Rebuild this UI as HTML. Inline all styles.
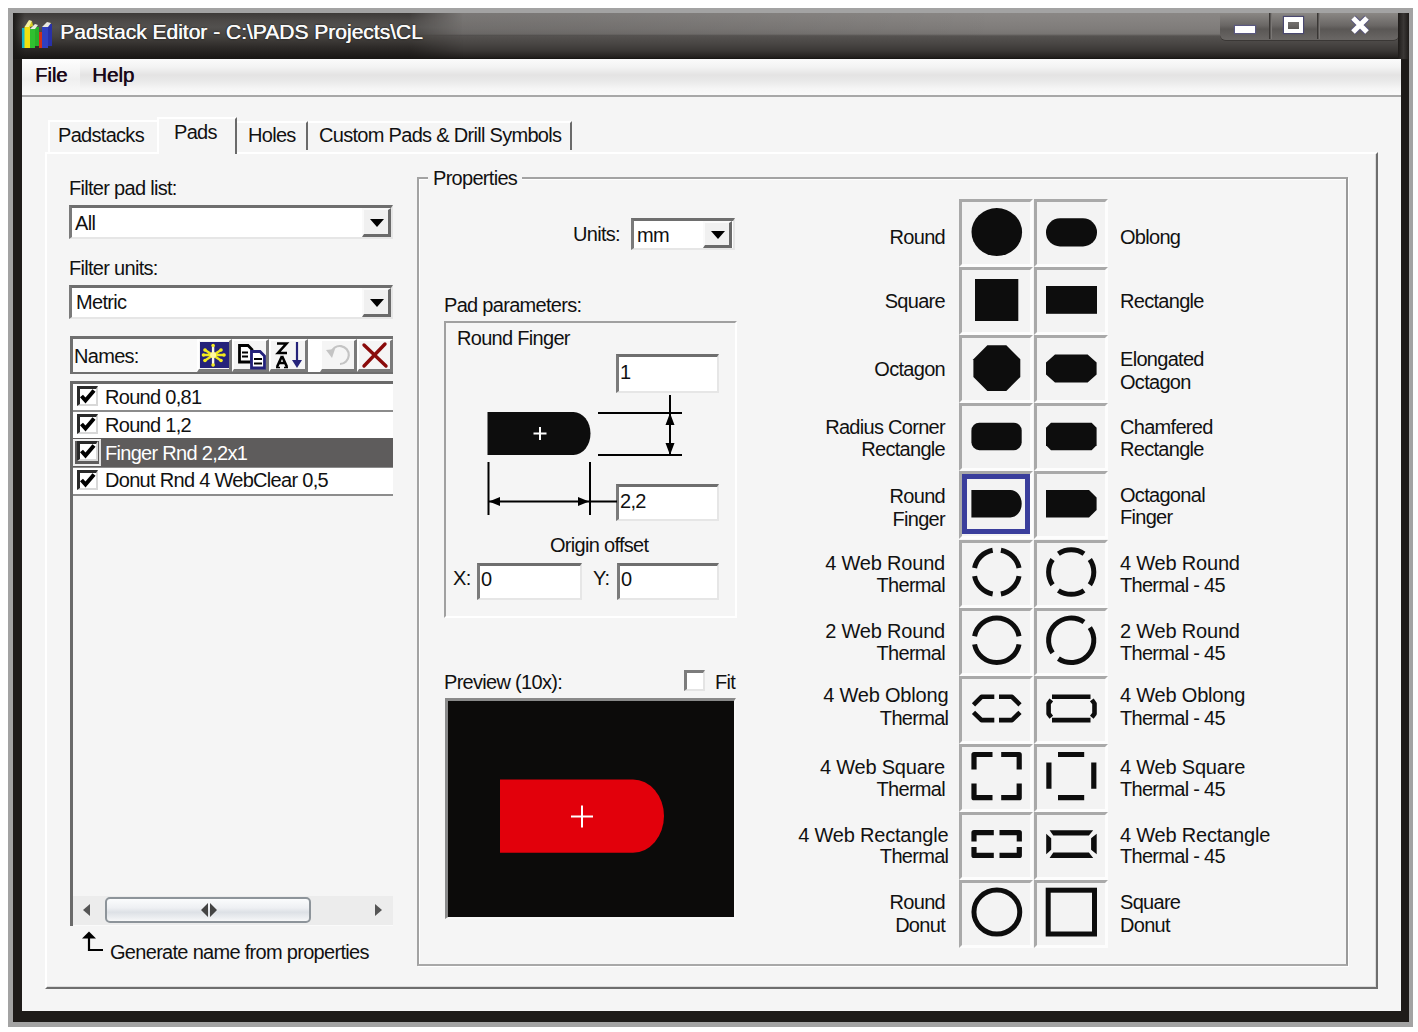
<!DOCTYPE html>
<html><head><meta charset="utf-8">
<style>
*{box-sizing:border-box;margin:0;padding:0}
html,body{width:1418px;height:1032px;overflow:hidden;background:#fff;font-family:"Liberation Sans",sans-serif;}
.a{position:absolute}
.t{position:absolute;font-size:20px;letter-spacing:-0.7px;color:#111;white-space:pre;line-height:23px}
.r{text-align:right}
.t:not(.r){margin-left:-1px}
.sunk{position:absolute;background:#fff;border-top:3px solid #6e6e6e;border-left:3px solid #7a7a7a;border-bottom:2px solid #e6e6e6;border-right:2px solid #e6e6e6}
.ddb{position:absolute;background:#f0f0f0;border-right:3px solid #6a6a6a;border-bottom:3px solid #6a6a6a;border-top:2px solid #fafafa;border-left:2px solid #fafafa}
.tri{position:absolute;width:0;height:0;border-left:7px solid transparent;border-right:7px solid transparent;border-top:8px solid #000}
.cell{position:absolute;width:74px;height:68px;background:#f3f3f3;border-top:3px solid #a9a9a9;border-left:3px solid #a9a9a9;border-bottom:3px solid #fdfdfd;border-right:3px solid #fdfdfd}
</style></head><body>
<!-- window frame -->
<div class="a" style="left:8px;top:8px;width:1405px;height:1019px;background:#a3a3a3"></div>
<div class="a" style="left:13px;top:13px;width:1396px;height:1009px;background:#1e1b19"></div>
<!-- title bar -->
<div class="a" style="left:13px;top:13px;width:1396px;height:46px;background:linear-gradient(#8a8785 0px,#858280 8px,#7f7c7a 16px,#777472 21px,#555250 23px,#4a4745 30px,#3a3735 38px,#252220 44px,#161412 46px)"></div><div class="a" style="left:300px;top:13px;width:700px;height:23px;background:linear-gradient(90deg,rgba(0,0,0,0.14),rgba(0,0,0,0.1) 40%,rgba(0,0,0,0))"></div>
<div id="content" class="a" style="left:22px;top:59px;width:1379px;height:952px;background:#f5f5f5"></div>

<div class="a" style="left:13px;top:13px;width:450px;height:46px;background:linear-gradient(#3e3b39 0px,#4d4a48 8px,#52504e 14px,#45423f 24px,#2e2b29 34px,#181614 46px);-webkit-mask-image:linear-gradient(90deg,#000 0%,#000 88%,transparent 100%);mask-image:linear-gradient(90deg,#000 0%,#000 88%,transparent 100%)"></div><div class="a" style="left:13px;top:13px;width:12px;height:46px;background:linear-gradient(90deg,#1a1816,rgba(26,24,22,0))"></div>
<svg class="a" style="left:20px;top:17px" width="34" height="34" viewBox="0 0 34 34">
<rect x="2" y="11" width="3" height="20" fill="#14b4c8"/>
<rect x="4.5" y="10" width="5.5" height="21" fill="#f0e010"/>
<polygon points="4.5,10 9,3 12,4 10,10" fill="#f6f2a0"/>
<polygon points="9,10 12,4 13,9 10,10" fill="#d8d020"/>
<rect x="10" y="12" width="5" height="19" fill="#30c030"/>
<rect x="15" y="10" width="4" height="19" fill="#28b028"/>
<polygon points="10,12 15,7 18,8 15,12" fill="#e8f0e0"/>
<rect x="19" y="15" width="3" height="16" fill="#d03018"/>
<rect x="22" y="10" width="6" height="21" fill="#3040c0"/>
<rect x="28" y="7" width="4" height="22" fill="#2830a8"/>
<polygon points="22,10 27,5 31,6 28,10" fill="#e8e8e0"/>
</svg>
<div class="a" style="left:60px;top:19px;font-size:21px;color:#fafafa;white-space:pre;line-height:26px;text-shadow:0.5px 0 0 #fafafa,0 0 2px #000">Padstack Editor - C:\PADS Projects\CL</div>
<!-- caption buttons -->
<div class="a" style="left:1220px;top:13px;width:179px;height:27px;border-radius:0 0 6px 6px;background:linear-gradient(#8a8784,#6b6866 45%,#5a5755 60%,#6a6765);box-shadow:0 1px 0 #3a3735"></div>
<div class="a" style="left:1269px;top:13px;width:3px;height:26px;background:linear-gradient(90deg,#2a2725,#8a8785)"></div>
<div class="a" style="left:1317px;top:13px;width:3px;height:26px;background:linear-gradient(90deg,#2a2725,#8a8785)"></div>
<div class="a" style="left:1235px;top:25.5px;width:20px;height:7px;background:#fff;box-shadow:0 0 1px 1px #5a5880"></div><div class="a" style="left:1398px;top:13px;width:11px;height:46px;background:linear-gradient(90deg,#1e1b19,#3a3735 50%,#1e1b19)"></div>
<div class="a" style="left:1284px;top:17px;width:19px;height:16px;border:4px solid #fff;border-top-width:5px;box-shadow:0 0 1px 1px #4a4870"></div>
<svg class="a" style="left:1349px;top:15px" width="22" height="20" viewBox="0 0 22 20"><path d="M4 3 L18 17 M18 3 L4 17" stroke="#5a5880" stroke-width="7"/><path d="M4 3 L18 17 M18 3 L4 17" stroke="#fff" stroke-width="5"/></svg>
<!-- menu bar -->
<div class="a" style="left:22px;top:59px;width:1379px;height:37px;background:linear-gradient(#fbfbfb 0px,#f3f3f3 8px,#e4e3e3 16px,#e9e9e9 22px,#f6f6f6 30px,#fafafa 37px)"></div>
<div class="a" style="left:22px;top:95px;width:1379px;height:2px;background:#a8a8a8"></div>
<div class="a" style="left:22px;top:60px;width:58px;height:32px;background:linear-gradient(#fdfdfd,#f4f4f4 40%,#efefef 60%,#f8f8f8)"></div><div class="a" style="left:35px;top:63px;font-size:20px;color:#1a0818;line-height:24px;text-shadow:0.6px 0 0 #1a0818">File</div>
<div class="a" style="left:92px;top:63px;font-size:20.5px;color:#180818;line-height:24px;text-shadow:0.6px 0 0 #180818">Help</div>

<div class="a" style="left:45px;top:152px;width:1333px;height:837px;border-top:2px solid #fff;border-left:2px solid #fff;border-right:2px solid #6e6e6e;border-bottom:2px solid #6e6e6e;box-shadow:inset -1px -1px 0 #dcdcdc"></div>
<div class="a" style="left:48px;top:120px;width:110px;height:32px;border-top:2px solid #fff;border-left:2px solid #fff"></div>
<div class="a" style="left:157px;top:117px;width:80px;height:37px;background:#f5f5f5;border-top:2px solid #fff;border-left:2px solid #fff;border-right:2px solid #6a6a6a"></div>
<div class="a" style="left:237px;top:121px;width:71px;height:29px;border-top:2px solid #fff;border-right:2px solid #6a6a6a"></div>
<div class="a" style="left:308px;top:121px;width:264px;height:29px;border-top:2px solid #fff;border-right:2px solid #6a6a6a"></div>
<div class="t" style="left:59px;top:124px">Padstacks</div>
<div class="t" style="left:175px;top:121px">Pads</div>
<div class="t" style="left:249px;top:124px">Holes</div>
<div class="t" style="left:320px;top:124px">Custom Pads &amp; Drill Symbols</div>

<!-- LEFT PANEL -->
<div class="t" style="left:70px;top:177px">Filter pad list:</div>
<div class="sunk" style="left:69px;top:205px;width:324px;height:34px"></div>
<div class="t" style="left:76px;top:212px">All</div>
<div class="ddb" style="left:362px;top:208px;width:29px;height:29px"></div>
<div class="tri" style="left:370px;top:219px"></div>
<div class="t" style="left:70px;top:257px">Filter units:</div>
<div class="sunk" style="left:69px;top:285px;width:324px;height:34px"></div>
<div class="t" style="left:77px;top:291px">Metric</div>
<div class="ddb" style="left:362px;top:288px;width:29px;height:29px"></div>
<div class="tri" style="left:370px;top:299px"></div>
<!-- toolbar -->
<div class="a" style="left:70px;top:336px;width:323px;height:38px;background:#f9f9f9;border:3px solid #6f6f6f;border-bottom-width:2px;border-right-width:2px"></div>
<div class="t" style="left:75px;top:345px">Names:</div>
<div class="a" style="left:197px;top:339px;width:35px;height:33px;background:#f5f5f5;border-right:3px solid #7a7a7a;border-bottom:3px solid #7a7a7a;border-top:2px solid #fff;border-left:2px solid #fff"></div>
<div class="a" style="left:200px;top:342px;width:29px;height:26px;background:#25237a"></div>
<svg class="a" style="left:200px;top:342px" width="29" height="26" viewBox="0 0 29 26">
<g stroke="#f0e820" stroke-width="2.4" stroke-linecap="round"><path d="M3.5 13 H24 M5 8 L21 18.5 M21 8 L5 18.5"/></g>
<path d="M13.1 3.5 V23" stroke="#f8f8e8" stroke-width="2.4" stroke-linecap="round"/>
<g fill="#f4ec20"><circle cx="13.1" cy="3.5" r="1.8"/><circle cx="13.1" cy="23" r="1.8"/><circle cx="3.5" cy="13" r="1.8"/><circle cx="24" cy="13" r="1.8"/><circle cx="5" cy="8" r="1.8"/><circle cx="21" cy="8" r="1.8"/><circle cx="5" cy="18.5" r="1.8"/><circle cx="21" cy="18.5" r="1.8"/></g>
<circle cx="13.1" cy="13" r="3" fill="#fff8a0"/>
</svg>
<div class="a" style="left:232px;top:339px;width:37px;height:33px;background:#f5f5f5;border-right:3px solid #7a7a7a;border-bottom:3px solid #7a7a7a;border-top:2px solid #fff;border-left:2px solid #fff"></div>
<svg class="a" style="left:237px;top:343px" width="30" height="27" viewBox="0 0 30 27">
<path d="M2.5 2.5 H11 L15 6.5 V19 H2.5 Z" fill="#fff" stroke="#000" stroke-width="2.8"/>
<path d="M5 9.5 H11 M5 13.5 H11" stroke="#000" stroke-width="2.2"/>
<path d="M14.5 8.5 H23 L27.5 13 V25 H14.5 Z" fill="#fff" stroke="#22207a" stroke-width="2.8"/>
<path d="M17 16 H25 M17 20.5 H25" stroke="#000" stroke-width="2.2"/>
</svg>
<div class="a" style="left:269px;top:339px;width:39px;height:33px;background:#f5f5f5;border-right:3px solid #7a7a7a;border-bottom:3px solid #7a7a7a;border-top:2px solid #fff;border-left:2px solid #fff"></div>
<svg class="a" style="left:273px;top:341px" width="32" height="29" viewBox="0 0 32 29">
<path d="M4 2.5 H13.5 L5 12 H14" fill="none" stroke="#000" stroke-width="2.6"/>
<path d="M9 15 L4 26 M9 15 L14 26 M6 22 H12" fill="none" stroke="#000" stroke-width="2.6"/>
<path d="M3 26.5 H7 M11 26.5 H15" stroke="#000" stroke-width="1.6"/>
<path d="M24 1 V24" stroke="#25237a" stroke-width="2.2"/>
<path d="M19 19 L24 27 L29 19 Z" fill="#25237a"/>
</svg>
<div class="a" style="left:308px;top:339px;width:12px;height:33px;background:#fff"></div>
<div class="a" style="left:320px;top:339px;width:37px;height:33px;background:#f5f5f5;border-right:3px solid #7a7a7a;border-bottom:3px solid #7a7a7a;border-top:2px solid #fff;border-left:2px solid #fff"></div>
<svg class="a" style="left:322px;top:341px" width="32" height="29" viewBox="0 0 32 29">
<path d="M9 12 A9 9 0 1 1 18 23" fill="none" stroke="#c4c4c4" stroke-width="2.2"/>
<path d="M4 9 L10 17 L13 8 Z" fill="#c4c4c4"/>
</svg>
<div class="a" style="left:357px;top:339px;width:36px;height:33px;background:#f5f5f5;border-right:3px solid #7a7a7a;border-bottom:3px solid #7a7a7a;border-top:2px solid #fff;border-left:2px solid #fff"></div>
<svg class="a" style="left:360px;top:341px" width="30" height="28" viewBox="0 0 30 28">
<path d="M4 4 L26 25 M25 3 L4 25" stroke="#8a0a0a" stroke-width="3.4" stroke-linecap="round"/>
</svg>
<!-- list -->
<div class="a" style="left:70px;top:381px;width:323px;height:545px;background:#f5f5f5;border-top:3px solid #6a6a6a;border-left:3px solid #6a6a6a"></div>
<div class="a" style="left:73px;top:384px;width:320px;height:26px;background:#fff"></div>
<div class="a" style="left:73px;top:410px;width:320px;height:2px;background:#8c8c8c"></div>
<div class="a" style="left:73px;top:412px;width:320px;height:26px;background:#fff"></div>
<div class="a" style="left:73px;top:438px;width:320px;height:29px;background:#5e5c5c"></div>
<div class="a" style="left:73px;top:467px;width:320px;height:1px;background:#8c8c8c"></div><div class="a" style="left:73px;top:439px;width:28px;height:27px;border:2px solid #f0f0f0;border-right-color:#e0e0e0"></div>
<div class="a" style="left:73px;top:468px;width:320px;height:26px;background:#fff"></div>
<div class="a" style="left:73px;top:494px;width:320px;height:2px;background:#8c8c8c"></div>
<div class="a" style="left:77px;top:386px;width:21px;height:20px;background:#fff;border-top:3px solid #2a2a2a;border-left:3px solid #2a2a2a;border-bottom:2px solid #d8d8d8;border-right:2px solid #d8d8d8"></div><svg class="a" style="left:80px;top:389px" width="16" height="15" viewBox="0 0 16 15"><path d="M1.5 7 L5.5 11.5 L14 1.5" fill="none" stroke="#000" stroke-width="4"/></svg><div class="t" style="left:106px;top:385.6px;color:#111">Round 0,81</div><div class="a" style="left:77px;top:414px;width:21px;height:20px;background:#fff;border-top:3px solid #2a2a2a;border-left:3px solid #2a2a2a;border-bottom:2px solid #d8d8d8;border-right:2px solid #d8d8d8"></div><svg class="a" style="left:80px;top:417px" width="16" height="15" viewBox="0 0 16 15"><path d="M1.5 7 L5.5 11.5 L14 1.5" fill="none" stroke="#000" stroke-width="4"/></svg><div class="t" style="left:106px;top:413.6px;color:#111">Round 1,2</div><div class="a" style="left:77px;top:441px;width:21px;height:20px;background:#fff;border-top:3px solid #2a2a2a;border-left:3px solid #2a2a2a;border-bottom:2px solid #d8d8d8;border-right:2px solid #d8d8d8"></div><svg class="a" style="left:80px;top:444px" width="16" height="15" viewBox="0 0 16 15"><path d="M1.5 7 L5.5 11.5 L14 1.5" fill="none" stroke="#000" stroke-width="4"/></svg><div class="t" style="left:106px;top:441.6px;color:#fff">Finger Rnd 2,2x1</div><div class="a" style="left:77px;top:470px;width:21px;height:20px;background:#fff;border-top:3px solid #2a2a2a;border-left:3px solid #2a2a2a;border-bottom:2px solid #d8d8d8;border-right:2px solid #d8d8d8"></div><svg class="a" style="left:80px;top:473px" width="16" height="15" viewBox="0 0 16 15"><path d="M1.5 7 L5.5 11.5 L14 1.5" fill="none" stroke="#000" stroke-width="4"/></svg><div class="t" style="left:106px;top:468.6px;color:#111">Donut Rnd 4 WebClear 0,5</div>
<!-- scrollbar -->
<div class="a" style="left:73px;top:896px;width:320px;height:30px;background:#ececec"></div>
<div class="a" style="left:73px;top:925px;width:320px;height:1px;background:#fafafa"></div>
<svg class="a" style="left:82px;top:903px" width="10" height="14"><path d="M8 1 L1 7 L8 13 Z" fill="#555"/></svg>
<svg class="a" style="left:373px;top:903px" width="10" height="14"><path d="M2 1 L9 7 L2 13 Z" fill="#555"/></svg>
<div class="a" style="left:105px;top:897px;width:206px;height:26px;border:2px solid #8d949a;border-radius:5px;background:linear-gradient(#fbfcfd,#eef0f3 40%,#dde1e6 60%,#eceef1 85%,#f7f8f9)"></div>
<svg class="a" style="left:199px;top:902px" width="20" height="16"><path d="M9 1 L2 8 L9 15 Z M11 1 L18 8 L11 15 Z" fill="#444"/></svg>
<svg class="a" style="left:80px;top:930px" width="26" height="24"><path d="M9 4 V20 H23" fill="none" stroke="#000" stroke-width="2.2"/><path d="M2 8.5 L9 1.5 L16 8.5 Z" fill="#000"/></svg>
<div class="t" style="left:111px;top:941px">Generate name from properties</div>

<!-- PROPERTIES GROUP -->
<div class="a" style="left:417px;top:177px;width:931px;height:789px;border:2px solid #a3a3a3;border-right-color:#9a9a9a;border-bottom-color:#a8a8a8;box-shadow:1px 1px 0 #fff, inset 1px 1px 0 #fff"></div>
<div class="a" style="left:428px;top:168px;width:94px;height:20px;background:#f5f5f5"></div>
<div class="t" style="left:434px;top:167px">Properties</div>
<div class="t" style="left:574px;top:223px">Units:</div>
<div class="sunk" style="left:631px;top:218px;width:104px;height:32px"></div>
<div class="t" style="left:638px;top:224px">mm</div>
<div class="ddb" style="left:703px;top:221px;width:29px;height:27px"></div>
<div class="tri" style="left:711px;top:231px"></div>
<div class="t" style="left:445px;top:294px">Pad parameters:</div>
<div class="a" style="left:444px;top:321px;width:293px;height:297px;border-top:2px solid #a0a0a0;border-left:2px solid #a0a0a0;border-right:2px solid #fff;border-bottom:2px solid #fff"></div>
<div class="t" style="left:458px;top:327px">Round Finger</div>
<div class="sunk" style="left:616px;top:354px;width:103px;height:39px"></div>
<div class="t" style="left:621px;top:361px">1</div>
<div class="sunk" style="left:616px;top:484px;width:103px;height:37px"></div>
<div class="t" style="left:621px;top:490px">2,2</div>
<svg class="a" style="left:470px;top:390px" width="240" height="135" viewBox="470 390 240 135">
<path d="M487.5 412 H573.5 A17 21.5 0 0 1 573.5 455 H487.5 Z" fill="#0d0d0d"/>
<path d="M540 427 V440 M533.5 433.5 H546.5" stroke="#fff" stroke-width="2"/>
<path d="M598 413 H682 M598 455 H682 M670 395 V455 M488.5 462 V515 M590 462 V515 M488.5 501.5 H617" fill="none" stroke="#000" stroke-width="2"/>
<path d="M665.5 425 L670 413 L674.5 425 Z M665.5 443 L670 455 L674.5 443 Z M500 497 L489 501.5 L500 506 Z M578 497 L589 501.5 L578 506 Z" fill="#000"/>
</svg>
<div class="t" style="left:551px;top:534px">Origin offset</div>
<div class="t" style="left:454px;top:567px">X:</div>
<div class="sunk" style="left:477px;top:563px;width:105px;height:37px"></div>
<div class="t" style="left:482px;top:568px">0</div>
<div class="t" style="left:594px;top:567px">Y:</div>
<div class="sunk" style="left:617px;top:563px;width:102px;height:37px"></div>
<div class="t" style="left:622px;top:568px">0</div>
<div class="t" style="left:445px;top:671px">Preview (10x):</div>
<div class="a" style="left:684px;top:670px;width:21px;height:21px;background:#fff;border-top:3px solid #7c7c7c;border-left:3px solid #7c7c7c;border-bottom:2px solid #e4e4e4;border-right:2px solid #e4e4e4"></div>
<div class="t" style="left:716px;top:671px">Fit</div>
<div class="a" style="left:445px;top:698px;width:291px;height:221px;background:#0c0b0a;border-top:3px solid #8a8a8a;border-left:3px solid #8a8a8a;border-bottom:2px solid #f8f8f8;border-right:2px solid #f8f8f8"></div>
<svg class="a" style="left:445px;top:698px" width="291" height="220" viewBox="445 698 291 220">
<path d="M500 779.5 H633 A31 36.6 0 0 1 633 852.7 H500 Z" fill="#e2000b"/>
<path d="M582 805.5 V827.5 M571 816.5 H593" stroke="#fff" stroke-width="2"/>
</svg>
<!-- GRID START --><div class="cell" style="left:959px;top:199px"></div>
<div class="cell" style="left:1034px;top:199px"></div>
<div class="cell" style="left:959px;top:267px"></div>
<div class="cell" style="left:1034px;top:267px"></div>
<div class="cell" style="left:959px;top:335px"></div>
<div class="cell" style="left:1034px;top:335px"></div>
<div class="cell" style="left:959px;top:403px"></div>
<div class="cell" style="left:1034px;top:403px"></div>
<div class="cell" style="left:959px;top:471px"></div>
<div class="cell" style="left:1034px;top:471px"></div>
<div class="cell" style="left:959px;top:540px"></div>
<div class="cell" style="left:1034px;top:540px"></div>
<div class="cell" style="left:959px;top:608px"></div>
<div class="cell" style="left:1034px;top:608px"></div>
<div class="cell" style="left:959px;top:676px"></div>
<div class="cell" style="left:1034px;top:676px"></div>
<div class="cell" style="left:959px;top:744px"></div>
<div class="cell" style="left:1034px;top:744px"></div>
<div class="cell" style="left:959px;top:812px"></div>
<div class="cell" style="left:1034px;top:812px"></div>
<div class="cell" style="left:959px;top:880px"></div>
<div class="cell" style="left:1034px;top:880px"></div>
<div class="a" style="left:962px;top:474px;width:68px;height:60px;border:5px solid #3a3e9c"></div>
<svg class="a" style="left:940px;top:190px" width="180" height="770" viewBox="940 190 180 770"><ellipse cx="996.8" cy="232.1" rx="25.3" ry="24" fill="#0d0d0d"/><rect x="1046" y="218.3" width="51" height="28.1" rx="14" fill="#0d0d0d"/><rect x="975" y="279" width="43.3" height="42" fill="#0d0d0d"/><rect x="1046" y="286" width="51" height="27.8" fill="#0d0d0d"/><path d="M987.4 345.3 H1006.3 L1020.3 359.3 V377 L1006.3 391 H987.4 L973.4 377 V359.3 Z" fill="#0d0d0d"/><path d="M1055 354.4 H1087.6 L1096.6 362.4 V374.5 L1087.6 382.5 H1055 L1046 374.5 V362.4 Z" fill="#0d0d0d"/><rect x="971.4" y="422.7" width="50.3" height="27.5" rx="8" fill="#0d0d0d"/><path d="M1051 422.7 H1091.6 L1096.6 427.7 V445.2 L1091.6 450.2 H1051 L1046 445.2 V427.7 Z" fill="#0d0d0d"/><path d="M971.4 489.9 H1010.5 A11.2 13.75 0 0 1 1010.5 517.4 H971.4 Z" fill="#0d0d0d"/><path d="M1046 490 H1089 L1096.6 497.5 V510 L1089 517.4 H1046 Z" fill="#0d0d0d"/><path d="M1019.02 576.16 A22.6 22.261000000000003 0 0 1 1000.92 593.99" fill="none" stroke="#0d0d0d" stroke-width="5"/><path d="M992.68 593.99 A22.6 22.261000000000003 0 0 1 974.58 576.16" fill="none" stroke="#0d0d0d" stroke-width="5"/><path d="M974.58 568.04 A22.6 22.261000000000003 0 0 1 992.68 550.21" fill="none" stroke="#0d0d0d" stroke-width="5"/><path d="M1000.92 550.21 A22.6 22.261000000000003 0 0 1 1019.02 568.04" fill="none" stroke="#0d0d0d" stroke-width="5"/><path d="M1084.00 590.45 A22.6 22.261000000000003 0 0 1 1058.40 590.45" fill="none" stroke="#0d0d0d" stroke-width="5"/><path d="M1052.57 584.71 A22.6 22.261000000000003 0 0 1 1052.57 559.49" fill="none" stroke="#0d0d0d" stroke-width="5"/><path d="M1058.40 553.75 A22.6 22.261000000000003 0 0 1 1084.00 553.75" fill="none" stroke="#0d0d0d" stroke-width="5"/><path d="M1089.83 559.49 A22.6 22.261000000000003 0 0 1 1089.83 584.71" fill="none" stroke="#0d0d0d" stroke-width="5"/><path d="M1019.02 644.36 A22.6 22.261000000000003 0 0 1 974.58 644.36" fill="none" stroke="#0d0d0d" stroke-width="5"/><path d="M974.58 636.24 A22.6 22.261000000000003 0 0 1 1019.02 636.24" fill="none" stroke="#0d0d0d" stroke-width="5"/><path d="M1052.57 652.91 A22.6 22.261000000000003 0 0 1 1084.00 621.95" fill="none" stroke="#0d0d0d" stroke-width="5"/><path d="M1089.83 627.69 A22.6 22.261000000000003 0 0 1 1058.40 658.65" fill="none" stroke="#0d0d0d" stroke-width="5"/><path d="M994.3 696.8 H981.5 L973.5 704.8 M999 696.8 H1012 L1020 704.8 M994.3 720.1 H981.5 L973.5 712.3 M999 720.1 H1012 L1020 712.3" fill="none" stroke="#0d0d0d" stroke-width="4.6" stroke-linejoin="round"/><path d="M1052 696.8 H1090.5 M1052 720.1 H1090.5" fill="none" stroke="#0d0d0d" stroke-width="4.6" stroke-linejoin="round"/><path d="M1051.3 699.8 L1048.6 703.5 V713.8 L1051.3 717.2 M1091.8 699.8 L1094.5 703.5 V713.8 L1091.8 717.2" fill="none" stroke="#0d0d0d" stroke-width="4.6" stroke-linejoin="round"/><path d="M992.5 754.5 H974.0 V769.5 M1001.2 754.5 H1019.2 V769.5 M992.5 797.7 H974.0 V783.5 M1001.2 797.7 H1019.2 V783.5" fill="none" stroke="#0d0d0d" stroke-width="5.2" stroke-linejoin="round"/><path d="M1058 754.5 H1084.2 M1058 797.7 H1084.2 M1048.9 762.5 V788.7 M1093.8 762.5 V788.7" fill="none" stroke="#0d0d0d" stroke-width="5.2" stroke-linejoin="round"/><path d="M993.8 832.6 H974 V841.5 M999.5 832.6 H1019.3 V841.5 M993.8 855.4 H974 V847 M999.5 855.4 H1019.3 V847" fill="none" stroke="#0d0d0d" stroke-width="5.2" stroke-linejoin="round"/><path d="M1049.6 830.3 H1093.2 L1088.9 835.4 H1053.3 Z M1049.6 858.1 H1093.2 L1088.9 852.6 H1053.3 Z M1046.2 833.8 L1051.2 838.3 V849.8 L1046.2 854.2 Z M1096.7 833.8 L1091.1 838.3 V849.8 L1096.7 854.2 Z" fill="#0d0d0d"/><ellipse cx="996.85" cy="912.1" rx="22.9" ry="22" fill="none" stroke="#0d0d0d" stroke-width="5"/><rect x="1048.2" y="890.2" width="46.3" height="43.8" fill="none" stroke="#0d0d0d" stroke-width="5"/></svg>
<div class="t r" style="right:473.0px;top:226.2px;">Round</div>
<div class="t" style="left:1121px;top:226.2px;">Oblong</div>
<div class="t r" style="right:473.0px;top:290.2px;">Square</div>
<div class="t" style="left:1121px;top:290.2px;">Rectangle</div>
<div class="t r" style="right:473.0px;top:358.3px;">Octagon</div>
<div class="t" style="left:1121px;top:348.1px;">Elongated</div>
<div class="t" style="left:1121px;top:370.5px;">Octagon</div>
<div class="t r" style="right:473.0px;top:415.8px;">Radius Corner</div>
<div class="t r" style="right:473.0px;top:437.9px;">Rectangle</div>
<div class="t" style="left:1121px;top:415.8px;">Chamfered</div>
<div class="t" style="left:1121px;top:437.9px;">Rectangle</div>
<div class="t r" style="right:473.0px;top:485.1px;">Round</div>
<div class="t r" style="right:473.0px;top:507.6px;">Finger</div>
<div class="t" style="left:1121px;top:484.3px;">Octagonal</div>
<div class="t" style="left:1121px;top:506.4px;">Finger</div>
<div class="t r" style="right:473.0px;top:551.9px;letter-spacing:-0.2px;">4 Web Round</div>
<div class="t r" style="right:473.0px;top:574.2px;">Thermal</div>
<div class="t" style="left:1121px;top:551.9px;letter-spacing:-0.2px;">4 Web Round</div>
<div class="t" style="left:1121px;top:574.2px;">Thermal - 45</div>
<div class="t r" style="right:473.0px;top:619.6px;letter-spacing:-0.2px;">2 Web Round</div>
<div class="t r" style="right:473.0px;top:642.1px;">Thermal</div>
<div class="t" style="left:1121px;top:619.6px;letter-spacing:-0.2px;">2 Web Round</div>
<div class="t" style="left:1121px;top:642.1px;">Thermal - 45</div>
<div class="t r" style="right:469.7px;top:684.4px;letter-spacing:-0.2px;">4 Web Oblong</div>
<div class="t r" style="right:469.7px;top:706.6px;">Thermal</div>
<div class="t" style="left:1121px;top:684.4px;letter-spacing:-0.2px;">4 Web Oblong</div>
<div class="t" style="left:1121px;top:706.6px;">Thermal - 45</div>
<div class="t r" style="right:473.0px;top:755.9px;letter-spacing:-0.2px;">4 Web Square</div>
<div class="t r" style="right:473.0px;top:777.7px;">Thermal</div>
<div class="t" style="left:1121px;top:755.9px;letter-spacing:-0.2px;">4 Web Square</div>
<div class="t" style="left:1121px;top:777.7px;">Thermal - 45</div>
<div class="t r" style="right:469.7px;top:823.7px;letter-spacing:-0.2px;">4 Web Rectangle</div>
<div class="t r" style="right:469.7px;top:845.4px;">Thermal</div>
<div class="t" style="left:1121px;top:823.7px;letter-spacing:-0.2px;">4 Web Rectangle</div>
<div class="t" style="left:1121px;top:845.4px;">Thermal - 45</div>
<div class="t r" style="right:473.0px;top:890.6px;">Round</div>
<div class="t r" style="right:473.0px;top:913.6px;">Donut</div>
<div class="t" style="left:1121px;top:890.6px;">Square</div>
<div class="t" style="left:1121px;top:913.6px;">Donut</div><!-- GRID END -->
</body></html>
